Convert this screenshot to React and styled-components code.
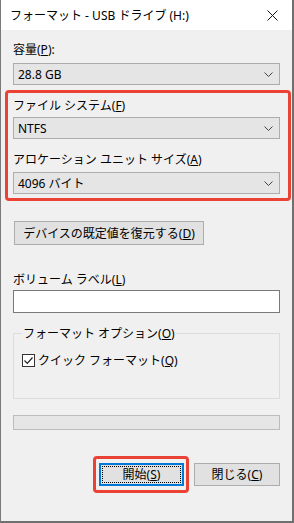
import React from "react"
import styled, { createGlobalStyle } from "styled-components"

const GlobalStyle = createGlobalStyle`
  html, body {
    margin: 0;
    padding: 0;
    background: #f0f0f0;
  }
  body {
    font-family: "Noto Sans", "Noto Sans CJK JP", sans-serif;
    font-size: 12px;
    color: #000;
  }
`

const Window = styled.div`
  width: 294px;
  height: 523px;
  box-sizing: border-box;
  border-left: 1px solid #7a7a7a;
  border-right: 2px solid #6f6f6f;
  border-bottom: 2px solid #6f6f6f;
  background: #f0f0f0;
  display: flex;
  flex-direction: column;
`

const TitleBar = styled.div`
  height: 30px;
  flex-shrink: 0;
  background: #fff;
  display: flex;
  align-items: center;
  justify-content: space-between;
  padding: 0 14px 0 9px;
`

const Title = styled.span`
  font-size: 12px;
  line-height: 15px;
`

const Body = styled.div`
  padding: 12px 12px 0 12px;
  display: flex;
  flex-direction: column;
`

const Label = styled.div`
  line-height: 15px;
  height: 15px;
  margin-top: ${(p) => p.$top || 0}px;
  margin-bottom: ${(p) => p.$bottom || 0}px;
  white-space: nowrap;
`

const Key = styled.span`
  text-decoration: underline;
  text-underline-offset: 1px;
`

const Select = styled.div`
  height: 22px;
  box-sizing: border-box;
  border: 1px solid #adadad;
  background: #e5e5e5;
  display: flex;
  align-items: center;
  justify-content: space-between;
  padding: 0 6px 0 4px;
  line-height: 15px;
`

const Highlight = styled.div`
  margin: 5px -11px 0 -8px;
  padding: 5px 8px 4px 5px;
  border: 3px solid #ea4335;
  border-radius: 4px;
  display: flex;
  flex-direction: column;
`

const Button = styled.div`
  height: ${(p) => p.$height || 24}px;
  width: ${(p) => (p.$width ? `${p.$width}px` : "auto")};
  box-sizing: border-box;
  border: 1px solid #adadad;
  background: #e1e1e1;
  display: flex;
  align-items: center;
  justify-content: center;
  line-height: 15px;
  white-space: nowrap;
  position: relative;
  ${(p) =>
    p.$primary &&
    `
    border: 2px solid #0078d7;
    &::after {
      content: "";
      position: absolute;
      inset: 1px;
      border: 1px dotted #000;
    }
  `}
`

const RestoreButton = styled(Button)`
  margin-top: 20px;
  margin-left: 1px;
`

const TextInput = styled.div`
  height: 23px;
  box-sizing: border-box;
  border: 1px solid #7a7a7a;
  background: #fff;
`

const Group = styled.fieldset`
  margin: 13px 0 0 0;
  padding: 12px 8px 30px 8px;
  border: 1px solid #dcdcdc;
  min-width: 0;
`

const Legend = styled.legend`
  padding: 0 1px;
  line-height: 15px;
`

const CheckRow = styled.div`
  display: flex;
  align-items: center;
  gap: 3px;
  line-height: 15px;
`

const CheckBox = styled.span`
  width: 13px;
  height: 13px;
  box-sizing: border-box;
  border: 1px solid #333;
  background: #fff;
  display: flex;
  align-items: center;
  justify-content: center;
`

const Progress = styled.div`
  margin-top: 16px;
  height: 15px;
  box-sizing: border-box;
  border: 1px solid #bcbcbc;
  background: #e6e6e6;
`

const ButtonRow = styled.div`
  margin-top: 26px;
  display: flex;
  justify-content: flex-end;
  align-items: center;
`

const Spot = styled.div`
  border: 3px solid #ea4335;
  border-radius: 4px;
  padding: 4px 2px 4px 3px;
`

const CloseButton = styled(Button)`
  margin-left: 5px;
`

const Chevron = () => (
  <svg width="9" height="5" viewBox="0 0 9 5">
    <path d="M0.5 0.5 L4.5 4.5 L8.5 0.5" fill="none" stroke="#444" strokeWidth="1" />
  </svg>
)

const CloseIcon = () => (
  <svg width="11" height="11" viewBox="0 0 11 11">
    <path d="M0.5 0.5 L10.5 10.5 M10.5 0.5 L0.5 10.5" stroke="#111" strokeWidth="1" />
  </svg>
)

const Check = () => (
  <svg width="11" height="11" viewBox="0 0 11 11">
    <path d="M1.5 5.5 L4.3 8.3 L9.5 2.5" fill="none" stroke="#222" strokeWidth="1.2" />
  </svg>
)

const App = () => (
  <Window>
    <GlobalStyle />
    <TitleBar>
      <Title>フォーマット - USB ドライブ (H:)</Title>
      <CloseIcon />
    </TitleBar>
    <Body>
      <Label $bottom={6}>
        容量(<Key>P</Key>):
      </Label>
      <Select>
        <span>28.8 GB</span>
        <Chevron />
      </Select>

      <Highlight>
        <Label $bottom={4}>
          ファイル システム(<Key>F</Key>)
        </Label>
        <Select>
          <span>NTFS</span>
          <Chevron />
        </Select>
        <Label $top={13} $bottom={5}>
          アロケーション ユニット サイズ(<Key>A</Key>)
        </Label>
        <Select>
          <span>4096 バイト</span>
          <Chevron />
        </Select>
      </Highlight>

      <RestoreButton $width={190}>
        デバイスの既定値を復元する(<Key>D</Key>)
      </RestoreButton>

      <Label $top={27} $bottom={3}>
        ボリューム ラベル(<Key>L</Key>)
      </Label>
      <TextInput />

      <Group>
        <Legend>
          フォーマット オプション(<Key>O</Key>)
        </Legend>
        <CheckRow>
          <CheckBox>
            <Check />
          </CheckBox>
          <span>
            クイック フォーマット(<Key>Q</Key>)
          </span>
        </CheckRow>
      </Group>

      <Progress />

      <ButtonRow>
        <Spot>
          <Button $primary $width={85} $height={23}>
            開始(<Key>S</Key>)
          </Button>
        </Spot>
        <CloseButton $width={86} $height={23}>
          閉じる(<Key>C</Key>)
        </CloseButton>
      </ButtonRow>
    </Body>
  </Window>
)

export default App
